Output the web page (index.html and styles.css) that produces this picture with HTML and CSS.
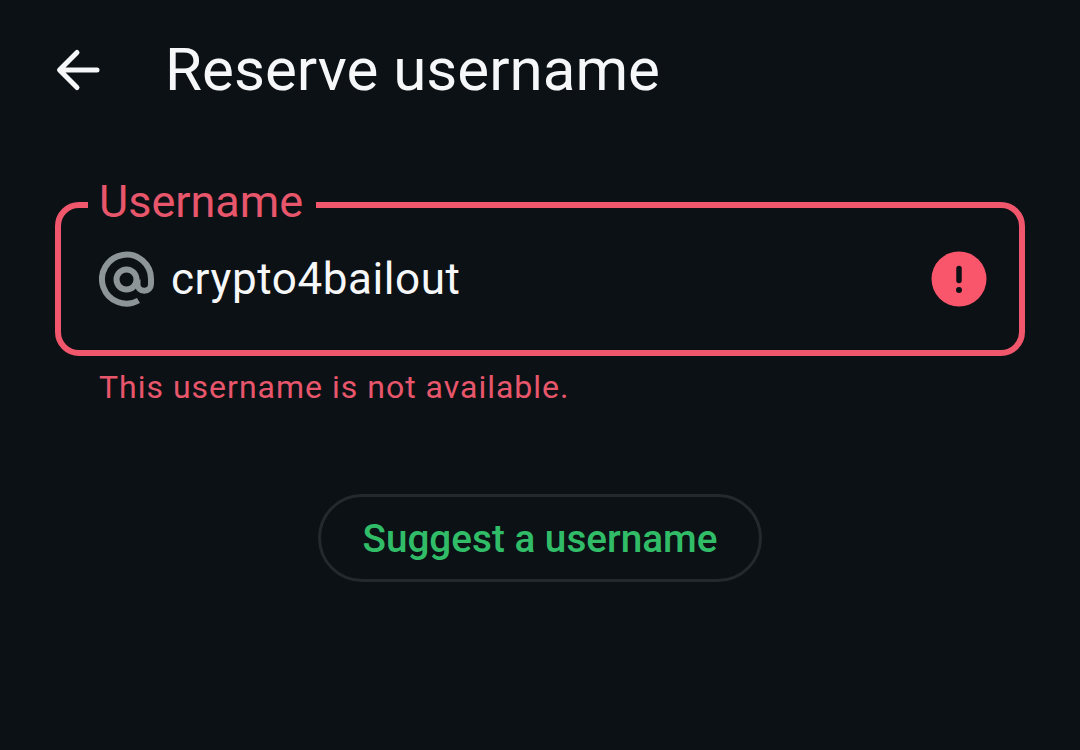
FILE: index.html
```html
<!DOCTYPE html>
<html lang="en">
<head>
<meta charset="utf-8">
<title>Reserve username</title>
<link rel="stylesheet" href="styles.css">
</head>
<body>
<header class="toolbar">
  <svg class="back" viewBox="0 0 46 46" width="46" height="46" aria-hidden="true">
    <path d="M42 23H5M22 5.500 4.500 23 22 40.500" fill="none" stroke="#f6f7f8" stroke-width="5" stroke-linecap="round" stroke-linejoin="round"/>
  </svg>
  <h1 class="title">Reserve username</h1>
</header>
<main class="content">
  <div class="field">
    <label class="field-label">Username</label>
    <svg class="at" viewBox="0 0 56 56" width="56" height="56" aria-hidden="true">
      <path d="M39.500 49.500A24.500 24.500 0 1 1 52 28.500v4.500a6.750 6.750 0 0 1-13.500 0v-4.500" fill="none" stroke="#8d9599" stroke-width="6"/>
      <circle cx="27.500" cy="28.500" r="10" fill="none" stroke="#8d9599" stroke-width="6"/>
    </svg>
    <span class="value">crypto4bailout</span>
    <svg class="alert" viewBox="0 0 56 56" width="56" height="56" aria-hidden="true">
      <circle cx="28" cy="28" r="27.500" fill="#f9566c"/>
      <path d="M28 17.500v12" stroke="#0c1116" stroke-width="5.500" stroke-linecap="round"/>
      <circle cx="28" cy="39" r="3" fill="#0c1116"/>
    </svg>
  </div>
  <p class="error">This username is not available.</p>
  <div class="actions">
    <button class="suggest" type="button">Suggest a username</button>
  </div>
</main>
</body>
</html>
```
FILE: styles.css
```css
* { box-sizing: border-box; }
html, body {
  margin: 0;
  height: 100%;
  background: #0c1116;
  overflow: hidden;
}
body {
  width: 1080px;
  height: 750px;
  font-family: Roboto, "Noto Sans", sans-serif;
}
.toolbar {
  display: flex;
  align-items: center;
  height: 140px;
  padding-left: 55px;
}
.back { flex: none; }
.title {
  margin: 0 0 0 64px;
  font-size: 60.100px;
  font-weight: 400;
  line-height: 1;
  color: #f6f7f8;
}
.content {
  padding: 62px 55px 0;
}
.field {
  position: relative;
  display: flex;
  align-items: center;
  height: 154px;
  padding: 0 32px 0 38px;
  border: 6px solid #f0566c;
  border-radius: 24px;
}
.field-label {
  position: absolute;
  left: 27px;
  top: -31px;
  padding: 0 13px 0 11px;
  background: #0c1116;
  color: #e8566b;
  font-size: 45px;
  line-height: 50px;
}
.at { flex: none; }
.value {
  flex: 1;
  margin-left: 16px;
  color: #f6f7f8;
  font-size: 44px;
  line-height: 56px;
  letter-spacing: 0.580px;
}
.alert { flex: none; }
.error {
  margin: 12px 0 0 44px;
  color: #e8566b;
  font-size: 32px;
  line-height: 38px;
  letter-spacing: 1px;
}
.actions {
  display: flex;
  justify-content: center;
  margin-top: 88px;
}
.suggest {
  width: 444px;
  height: 88px;
  background: transparent;
  border: 3px solid #24292e;
  border-radius: 44px;
  color: #31bd68;
  font-family: inherit;
  font-size: 38.700px;
  font-weight: 500;
  padding: 0;
}
```
